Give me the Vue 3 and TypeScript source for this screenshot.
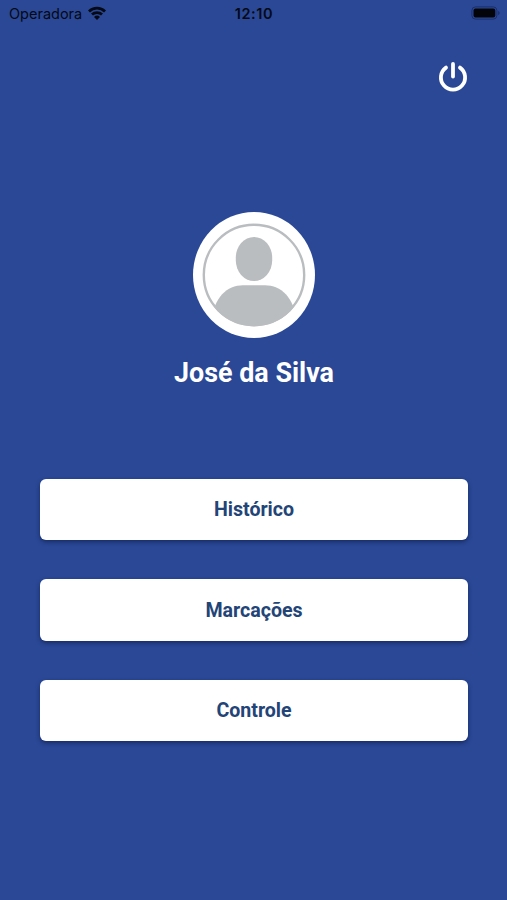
<script setup lang="ts">
interface MenuItem {
  id: string
  label: string
}

const userName = 'José da Silva'
const items: MenuItem[] = [
  { id: 'history', label: 'Histórico' },
  { id: 'bookings', label: 'Marcações' },
  { id: 'control', label: 'Controle' },
]
</script>

<template>
  <main class="screen">
    <header class="status">
      <div class="carrier">
        <span>Operadora</span>
        <svg class="wifi" viewBox="0 0 18 14" width="18" height="14">
          <g fill="none" stroke="#040915" stroke-width="2.8">
            <path d="M1 5.4a11.4 11.4 0 0 1 16 0" />
            <path d="M4 8.6a7.1 7.1 0 0 1 10 0" />
          </g>
          <path d="M9 13.9 6 10.9a4.3 4.3 0 0 1 6 0z" fill="#040915" />
        </svg>
      </div>
      <span class="time">12:10</span>
      <svg class="battery" viewBox="0 0 30 14" width="30" height="14">
        <rect x="0.9" y="0.9" width="25" height="12.2" rx="3.6" fill="none" stroke="#1b2f68" stroke-width="1" />
        <rect x="2.5" y="2.4" width="21.8" height="9.2" rx="2" fill="#02040a" />
        <path d="M27.2 4.8c2 .8 2 3.6 0 4.4z" fill="#1b2f68" />
      </svg>
    </header>

    <div class="toolbar">
      <button class="power" type="button" aria-label="Sair">
        <svg viewBox="0 0 30 32" width="30" height="32">
          <g fill="none" stroke="#fff" stroke-width="3.8" stroke-linecap="round">
            <path d="M15 3.9v12.7" />
            <path d="M8 7.6a12.1 12.1 0 1 0 14 0" />
          </g>
        </svg>
      </button>
    </div>

    <section class="profile">
      <svg class="avatar" viewBox="0 0 122 126" width="122" height="126">
        <defs>
          <clipPath id="portrait">
            <ellipse cx="61" cy="63" rx="51.3" ry="51.2" />
          </clipPath>
        </defs>
        <ellipse cx="61" cy="63" rx="61" ry="63" fill="#fff" />
        <path
          clip-path="url(#portrait)"
          d="M18 126V110C21 85 34 73.200 50 73.200H72C88 73.200 101 85 104 110V126Z"
          fill="#babdbf"
        />
        <rect x="42.800" y="25" width="36.400" height="44" rx="18.200" ry="20.500" fill="#babdbf" />
        <ellipse cx="61" cy="63" rx="50.200" ry="50.200" fill="none" stroke="#babdbf" stroke-width="2.400" />
      </svg>
      <h1 class="name">{{ userName }}</h1>
    </section>

    <nav class="menu">
      <button v-for="item in items" :key="item.id" class="item" type="button">{{ item.label }}</button>
    </nav>
  </main>
</template>

<style>
body {
  margin: 0;
  background: #2a4896;
}
</style>

<style scoped>
.screen {
  box-sizing: border-box;
  display: flex;
  flex-direction: column;
  width: 100%;
  height: 900px;
  overflow: hidden;
  background: #2a4896;
  font-family: Roboto, "Liberation Sans", sans-serif;
}

.status {
  display: grid;
  grid-template-columns: 1fr auto 1fr;
  align-items: center;
  height: 28px;
  padding: 0 6px 2px 9px;
  box-sizing: border-box;
  color: #040915;
  font-family: Inter, "Liberation Sans", sans-serif;
  font-size: 14.5px;
}

.carrier {
  display: flex;
  align-items: center;
  gap: 6px;
}

.wifi {
  display: block;
}

.time {
  margin-right: 2px;
  font-weight: 600;
  letter-spacing: 0.6px;
}

.battery {
  display: block;
  justify-self: end;
}

.toolbar {
  display: flex;
  justify-content: flex-end;
  height: 184px;
  padding: 32px 39px 0 0;
  box-sizing: border-box;
}

.power {
  width: 30px;
  height: 32px;
  padding: 0;
  border: 0;
  background: none;
}

.power svg {
  display: block;
}

.profile {
  display: flex;
  flex-direction: column;
  align-items: center;
  height: 267px;
}

.avatar {
  display: block;
}

.name {
  margin: 18px 0 0 1px;
  color: #fff;
  font-size: 26.900px;
  font-weight: 700;
  line-height: 34px;
}

.menu {
  display: flex;
  flex-direction: column;
  gap: 39px;
  padding: 0 39px 0 40px;
}

.item {
  height: 61.400px;
  padding: 1px 0 0;
  border: 0;
  border-radius: 6px;
  background: #fff;
  box-shadow: 0 2px 4px rgba(12, 25, 65, 0.6);
  color: #234476;
  font-family: inherit;
  font-size: 19.600px;
  font-weight: 700;
  line-height: 24px;
}
</style>
